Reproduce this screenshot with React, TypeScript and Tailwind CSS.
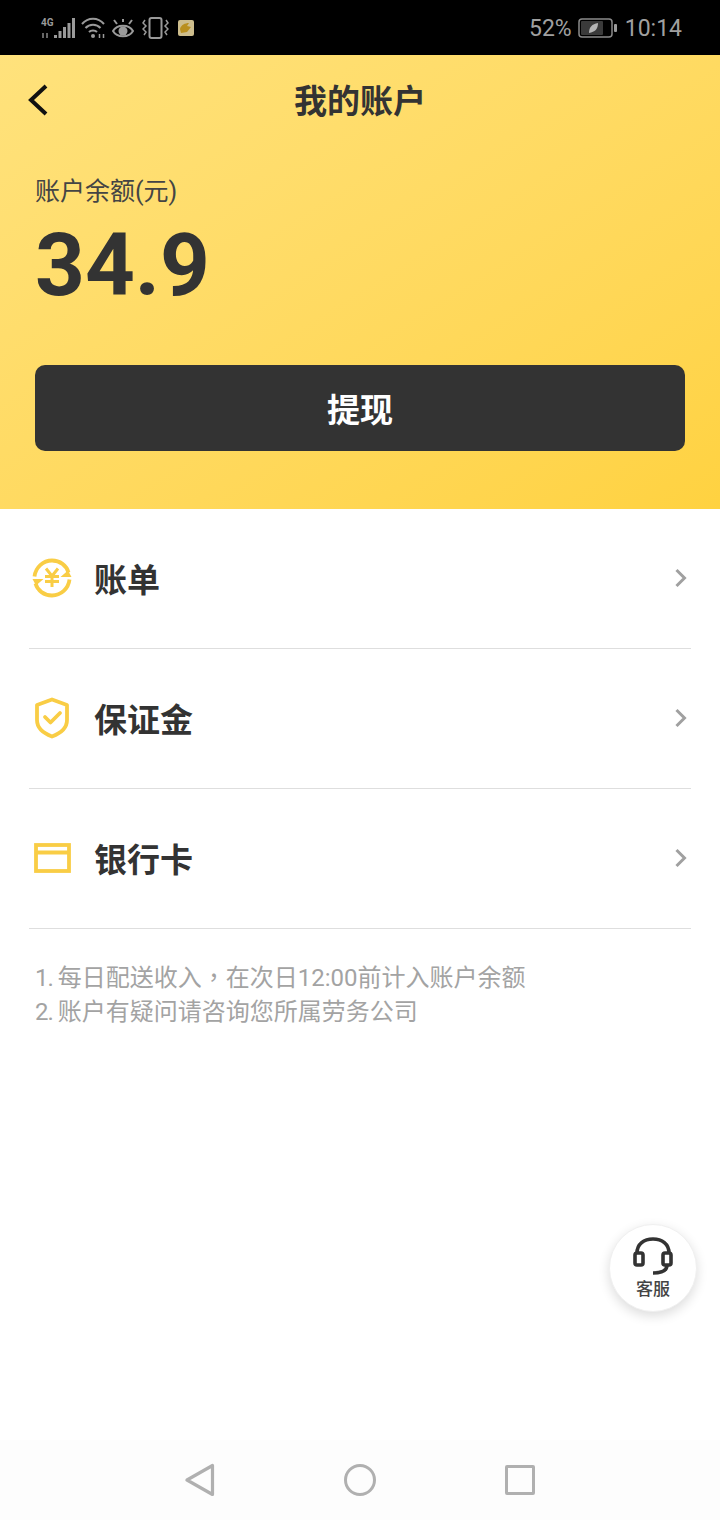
const cjk = "font-['Roboto','Noto_Sans_CJK_SC',sans-serif]";

function StatusBar() {
  return (
    <div className="h-[55px] bg-black flex items-center justify-between pl-[41px] pr-[38px] text-[#a0a0a0]">
      <div className="flex items-center">
        <svg width="34" height="22" viewBox="0 0 34 22" fill="#9a9a9a">
          <text x="0" y="9" fontSize="10" fontWeight="700" fontFamily="Roboto, sans-serif">4G</text>
          <rect x="1" y="16" width="2" height="5" fill="#666" />
          <rect x="5" y="16" width="2" height="5" fill="#666" />
          <rect x="13" y="18" width="3" height="3" />
          <rect x="17.500" y="14" width="3" height="7" />
          <rect x="22" y="10" width="3" height="11" />
          <rect x="26.500" y="6" width="3" height="15" />
          <rect x="31" y="1" width="3" height="20" />
        </svg>
        <svg width="24" height="22" viewBox="0 0 24 22" fill="none" stroke="#9a9a9a" strokeWidth="2" className="ml-[6px]">
          <path d="M1 7c6-7 16-7 22 0" />
          <path d="M4.500 11c4-4.500 11-4.500 15 0" />
          <path d="M8 15c2-2 6-2 8 0" />
          <circle cx="12" cy="19" r="2" fill="#9a9a9a" stroke="none" />
          <path d="M18.500 17v4M22.500 17v4" strokeWidth="1.500" />
        </svg>
        <svg width="22" height="20" viewBox="0 0 22 20" fill="none" stroke="#9a9a9a" strokeWidth="2" className="ml-[7px] mt-[3px]">
          <path d="M1 12c4-7 16-7 20 0c-4 7-16 7-20 0z" />
          <circle cx="11" cy="12" r="4.500" fill="#9a9a9a" stroke="none" />
          <path d="M2 1l3 4M11 0v3M20 1l-3 4" strokeWidth="2" />
        </svg>
        <svg width="27" height="22" viewBox="0 0 27 22" fill="none" stroke="#9a9a9a" strokeWidth="1.500" className="ml-[8px]">
          <rect x="7.500" y="1" width="12" height="20" rx="2" strokeWidth="2" />
          <path d="M3 3l-2 3l3 3l-3 3l3 3l-2 3M24 3l2 3l-3 3l3 3l-3 3l2 3" />
        </svg>
        <svg width="16" height="16" viewBox="0 0 16 16" className="ml-[9px] mt-[1px]">
          <rect width="16" height="16" rx="2" fill="#cdbd8c" />
          <path d="M2 9c1-4 5-6 9-6l-2 3l4 1l-4 5l-6 1z" fill="#b98f1e" />
        </svg>
      </div>
      <div className="flex items-center text-[23px] font-['Roboto',sans-serif] pt-[3px]">
        <span>52%</span>
        <svg width="40" height="20" viewBox="0 0 40 20" fill="none" className="ml-[6px] -mt-[3px]">
          <rect x="1" y="1" width="33" height="18" rx="3" stroke="#8a8a8a" strokeWidth="1.500" />
          <rect x="3" y="3" width="22" height="14" rx="1" fill="#3a3a3a" />
          <path d="M11 15c0-6 3-9 9-10c0 6-3 9-9 10z" fill="#b5b5b5" />
          <rect x="36" y="6" width="3" height="8" rx="1" fill="#9a9a9a" />
        </svg>
        <span className="ml-[7px]">10:14</span>
      </div>
    </div>
  );
}

function BillIcon() {
  return (
    <svg width="40" height="40" viewBox="0 0 40 40" fill="none" stroke="#f9cd45" strokeWidth="3.800">
      <path d="M2.500 18.500C3.500 9.500 11 2.500 20 2.500c8 0 14.500 5 16.500 12" />
      <path d="M37.500 21.500C36.500 30.500 29 37.500 20 37.500c-8 0-14.500-5-16.500-12" />
      <path d="M39.500 19h-11l7.500-6.500zM0.500 21h11l-7.500 6.500z" fill="#f9cd45" stroke="none" />
      <path d="M14 10.500l6 7.500l6-7.500M13 18.500h14M13 23.500h14M20 18v11" strokeWidth="3" />
    </svg>
  );
}

function ShieldIcon() {
  return (
    <svg width="36" height="42" viewBox="0 0 36 42" fill="none" stroke="#f9cd45" strokeWidth="3.800" strokeLinejoin="round">
      <path d="M18 2.500L33 8v15c0 8-7 13.500-15 16.500C10 36.500 3 31 3 23V8z" />
      <path d="M11 20l5.500 5.500L26 16" strokeLinecap="round" />
    </svg>
  );
}

function CardIcon() {
  return (
    <svg width="37" height="30" viewBox="0 0 37 30" fill="none" stroke="#f9cd45" strokeWidth="3.800">
      <rect x="2" y="2" width="33" height="26" />
      <path d="M2 9.500h33" />
    </svg>
  );
}

function MenuRow({ icon, label }: { icon: React.ReactNode; label: string }) {
  return (
    <div className="h-[140px] flex items-center border-b border-[#dedede] pb-[2px]">
      <div className="w-[46px] flex justify-center">{icon}</div>
      <span className="ml-[19px] text-[33px] font-bold text-[#333333] leading-none pt-[5px]">{label}</span>
      <svg width="14" height="20" viewBox="0 0 14 20" fill="none" stroke="#a0a0a0" strokeWidth="3" className="ml-auto mr-[3px]">
        <path d="M2.500 2l8 8l-8 8" />
      </svg>
    </div>
  );
}

export default function App() {
  return (
    <div className={`relative w-[720px] h-[1520px] bg-white overflow-hidden flex flex-col ${cjk}`}>
      <StatusBar />

      <div className="h-[454px] bg-gradient-to-br from-[#ffe27c] to-[#ffd240] px-[35px]">
        <div className="relative h-[90px] flex items-center justify-center">
          <svg width="20" height="32" viewBox="0 0 20 32" fill="none" stroke="#111111" strokeWidth="4" className="absolute left-[-7px] top-[29px]">
            <path d="M18 2L3 16l15 14" />
          </svg>
          <span className="text-[33px] font-bold text-[#333333] pt-[4px]">我的账户</span>
        </div>
        <div className="mt-[31px] text-[25px] leading-[32px] text-[#444444]">账户余额(元)</div>
        <div className="mt-[13px] text-[87px] leading-[88px] font-bold text-[#333333]">34.9</div>
        <button className="mt-[56px] w-[650px] h-[86px] rounded-[10px] bg-[#333333] text-white text-[33px] font-bold pt-[5px]">
          提现
        </button>
      </div>

      <div className="px-[29px]">
        <MenuRow icon={<BillIcon />} label="账单" />
        <MenuRow icon={<ShieldIcon />} label="保证金" />
        <MenuRow icon={<CardIcon />} label="银行卡" />
      </div>

      <div className="mt-[29px] px-[35px] text-[24px] leading-[35px] text-[#a3a3a3]">
        <p className="h-[35px]">
          <span className="tracking-[-1px]">1. </span>每日配送收入<span className="font-['Noto_Sans_CJK_TC',sans-serif]">，</span>在次日12:00前计入账户余额
        </p>
        <p className="h-[35px] mt-[2px]">
          <span className="tracking-[-1px]">2. </span>账户有疑问请咨询您所属劳务公司
        </p>
      </div>

      {/* floating customer service button */}
      <div className="absolute left-[609px] top-[1224px] w-[88px] h-[88px] rounded-full bg-white border border-[#f0f0f0] shadow-[0_4px_12px_rgba(0,0,0,0.14)] flex flex-col items-center pt-[12px]">
        <svg width="40" height="38" viewBox="0 0 40 38" fill="none" stroke="#333333" strokeWidth="3.600">
          <path d="M4 16C4 7 11 2 20 2s16 5 16 14" />
          <rect x="2" y="16" width="8" height="12" rx="2" />
          <rect x="30" y="16" width="8" height="12" rx="2" />
          <path d="M34 28c0 5-5 8-14 8" />
        </svg>
        <span className="text-[17px] leading-[20px] font-medium text-[#444444] mt-[4px]">客服</span>
      </div>

      <div className="mt-auto h-[80px] bg-[#fdfdfd] relative">
        <svg width="30" height="34" viewBox="0 0 30 34" fill="none" stroke="#b0b0b0" strokeWidth="3.200" strokeLinejoin="round" className="absolute left-[185px] top-[23px]">
          <path d="M27.500 2.500v29L2 17z" />
        </svg>
        <div className="absolute left-[344px] top-[24px] w-[32px] h-[32px] rounded-full border-[3px] border-[#b0b0b0]" />
        <div className="absolute left-[505px] top-[25px] w-[30px] h-[30px] rounded-[2px] border-[3px] border-[#b0b0b0]" />
      </div>
    </div>
  );
}
